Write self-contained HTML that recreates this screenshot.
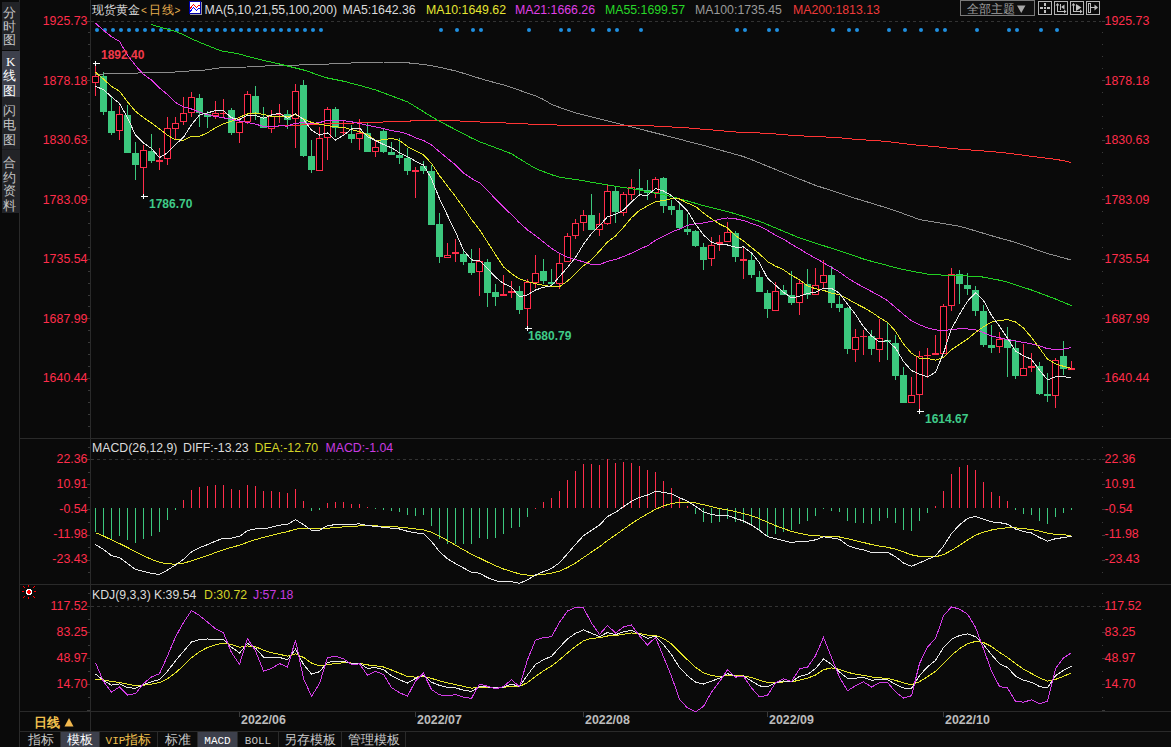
<!DOCTYPE html><html><head><meta charset="utf-8"><style>
html,body{margin:0;padding:0;background:#0a0a0a;width:1171px;height:747px;overflow:hidden}
svg{display:block}
text{font-family:"Liberation Sans", sans-serif;}
</style></head><body>
<svg width="1171" height="747" viewBox="0 0 1171 747">
<rect x="0" y="0" width="1171" height="747" fill="#0a0a0a"/>

<rect x="19" y="0" width="1" height="747" fill="#2a2a2a" shape-rendering="crispEdges"/>
<rect x="2" y="2" width="18" height="48" fill="#222327" shape-rendering="crispEdges"/>
<text x="3" y="17" font-size="13" fill="#c4c4c4">分</text>
<text x="3" y="31" font-size="13" fill="#c4c4c4">时</text>
<text x="3" y="44" font-size="13" fill="#c4c4c4">图</text>
<rect x="2" y="51" width="18" height="46" fill="#3d404c" shape-rendering="crispEdges"/>
<text x="6" y="66" font-size="13" fill="#ffffff" style="font-family:'Liberation Serif',serif">K</text>
<text x="3" y="80" font-size="13" fill="#ffffff">线</text>
<text x="3" y="95" font-size="13" fill="#ffffff">图</text>
<rect x="2" y="97" width="18" height="53" fill="#222327" shape-rendering="crispEdges"/>
<text x="3" y="115" font-size="13" fill="#c4c4c4">闪</text>
<text x="3" y="129" font-size="13" fill="#c4c4c4">电</text>
<text x="3" y="144" font-size="13" fill="#c4c4c4">图</text>
<rect x="2" y="150" width="18" height="63" fill="#222327" shape-rendering="crispEdges"/>
<text x="3" y="167" font-size="13" fill="#c4c4c4">合</text>
<text x="3" y="182" font-size="13" fill="#c4c4c4">约</text>
<text x="3" y="195" font-size="13" fill="#c4c4c4">资</text>
<text x="3" y="210" font-size="13" fill="#c4c4c4">料</text>
<rect x="2" y="149" width="18" height="1" fill="#1a1b1e" shape-rendering="crispEdges"/>
<g shape-rendering="crispEdges" stroke="#2a2a2a" stroke-width="1">
<line x1="90.5" y1="0" x2="90.5" y2="731"/>
<line x1="20" y1="438.5" x2="1171" y2="438.5"/>
<line x1="20" y1="584.5" x2="1171" y2="584.5"/>
<line x1="20" y1="711.5" x2="1171" y2="711.5"/>
<line x1="20" y1="731.5" x2="1171" y2="731.5"/>
</g>
<g shape-rendering="crispEdges" fill="#3a3a3a">
<rect x="87" y="21" width="3" height="1"/>
<rect x="1102" y="21" width="3" height="1"/>
<rect x="88" y="32" width="2" height="1"/>
<rect x="1102" y="32" width="1" height="1"/>
<rect x="88" y="44" width="2" height="1"/>
<rect x="1102" y="44" width="1" height="1"/>
<rect x="88" y="56" width="2" height="1"/>
<rect x="1102" y="56" width="1" height="1"/>
<rect x="88" y="68" width="2" height="1"/>
<rect x="1102" y="68" width="1" height="1"/>
<rect x="87" y="80" width="3" height="1"/>
<rect x="1102" y="80" width="3" height="1"/>
<rect x="88" y="92" width="2" height="1"/>
<rect x="1102" y="92" width="1" height="1"/>
<rect x="88" y="104" width="2" height="1"/>
<rect x="1102" y="104" width="1" height="1"/>
<rect x="88" y="116" width="2" height="1"/>
<rect x="1102" y="116" width="1" height="1"/>
<rect x="88" y="128" width="2" height="1"/>
<rect x="1102" y="128" width="1" height="1"/>
<rect x="87" y="140" width="3" height="1"/>
<rect x="1102" y="140" width="3" height="1"/>
<rect x="88" y="152" width="2" height="1"/>
<rect x="1102" y="152" width="1" height="1"/>
<rect x="88" y="163" width="2" height="1"/>
<rect x="1102" y="163" width="1" height="1"/>
<rect x="88" y="175" width="2" height="1"/>
<rect x="1102" y="175" width="1" height="1"/>
<rect x="88" y="187" width="2" height="1"/>
<rect x="1102" y="187" width="1" height="1"/>
<rect x="87" y="199" width="3" height="1"/>
<rect x="1102" y="199" width="3" height="1"/>
<rect x="88" y="211" width="2" height="1"/>
<rect x="1102" y="211" width="1" height="1"/>
<rect x="88" y="223" width="2" height="1"/>
<rect x="1102" y="223" width="1" height="1"/>
<rect x="88" y="235" width="2" height="1"/>
<rect x="1102" y="235" width="1" height="1"/>
<rect x="88" y="247" width="2" height="1"/>
<rect x="1102" y="247" width="1" height="1"/>
<rect x="87" y="259" width="3" height="1"/>
<rect x="1102" y="259" width="3" height="1"/>
<rect x="88" y="271" width="2" height="1"/>
<rect x="1102" y="271" width="1" height="1"/>
<rect x="88" y="283" width="2" height="1"/>
<rect x="1102" y="283" width="1" height="1"/>
<rect x="88" y="295" width="2" height="1"/>
<rect x="1102" y="295" width="1" height="1"/>
<rect x="88" y="306" width="2" height="1"/>
<rect x="1102" y="306" width="1" height="1"/>
<rect x="87" y="318" width="3" height="1"/>
<rect x="1102" y="318" width="3" height="1"/>
<rect x="88" y="330" width="2" height="1"/>
<rect x="1102" y="330" width="1" height="1"/>
<rect x="88" y="342" width="2" height="1"/>
<rect x="1102" y="342" width="1" height="1"/>
<rect x="88" y="354" width="2" height="1"/>
<rect x="1102" y="354" width="1" height="1"/>
<rect x="88" y="366" width="2" height="1"/>
<rect x="1102" y="366" width="1" height="1"/>
<rect x="87" y="378" width="3" height="1"/>
<rect x="1102" y="378" width="3" height="1"/>
<rect x="88" y="390" width="2" height="1"/>
<rect x="1102" y="390" width="1" height="1"/>
<rect x="88" y="402" width="2" height="1"/>
<rect x="1102" y="402" width="1" height="1"/>
<rect x="88" y="414" width="2" height="1"/>
<rect x="1102" y="414" width="1" height="1"/>
<rect x="88" y="426" width="2" height="1"/>
<rect x="1102" y="426" width="1" height="1"/>
<rect x="88" y="447" width="2" height="1"/>
<rect x="1102" y="447" width="1" height="1"/>
<rect x="87" y="459" width="3" height="1"/>
<rect x="1102" y="459" width="3" height="1"/>
<rect x="88" y="472" width="2" height="1"/>
<rect x="1102" y="472" width="1" height="1"/>
<rect x="87" y="484" width="3" height="1"/>
<rect x="1102" y="484" width="3" height="1"/>
<rect x="88" y="497" width="2" height="1"/>
<rect x="1102" y="497" width="1" height="1"/>
<rect x="87" y="509" width="3" height="1"/>
<rect x="1102" y="509" width="3" height="1"/>
<rect x="88" y="522" width="2" height="1"/>
<rect x="1102" y="522" width="1" height="1"/>
<rect x="87" y="535" width="3" height="1"/>
<rect x="1102" y="535" width="3" height="1"/>
<rect x="88" y="547" width="2" height="1"/>
<rect x="1102" y="547" width="1" height="1"/>
<rect x="87" y="560" width="3" height="1"/>
<rect x="1102" y="560" width="3" height="1"/>
<rect x="88" y="572" width="2" height="1"/>
<rect x="1102" y="572" width="1" height="1"/>
<rect x="88" y="593" width="2" height="1"/>
<rect x="1102" y="593" width="1" height="1"/>
<rect x="87" y="606" width="3" height="1"/>
<rect x="1102" y="606" width="3" height="1"/>
<rect x="88" y="619" width="2" height="1"/>
<rect x="1102" y="619" width="1" height="1"/>
<rect x="87" y="632" width="3" height="1"/>
<rect x="1102" y="632" width="3" height="1"/>
<rect x="88" y="645" width="2" height="1"/>
<rect x="1102" y="645" width="1" height="1"/>
<rect x="87" y="658" width="3" height="1"/>
<rect x="1102" y="658" width="3" height="1"/>
<rect x="88" y="671" width="2" height="1"/>
<rect x="1102" y="671" width="1" height="1"/>
<rect x="87" y="684" width="3" height="1"/>
<rect x="1102" y="684" width="3" height="1"/>
<rect x="88" y="697" width="2" height="1"/>
<rect x="1102" y="697" width="1" height="1"/>
<rect x="87" y="710" width="3" height="1"/>
<rect x="1102" y="710" width="3" height="1"/>
</g>
<line x1="91" y1="21.5" x2="1101" y2="21.5" stroke="#333333" stroke-width="1" stroke-dasharray="3 3" shape-rendering="crispEdges"/>
<line x1="91" y1="459.5" x2="1101" y2="459.5" stroke="#333333" stroke-width="1" stroke-dasharray="3 3" shape-rendering="crispEdges"/>
<line x1="91" y1="606.5" x2="1101" y2="606.5" stroke="#333333" stroke-width="1" stroke-dasharray="3 3" shape-rendering="crispEdges"/>
<text x="87.5" y="25" font-size="12.4" fill="#ff2d4b" text-anchor="end">1925.73</text>
<text x="1104.5" y="25" font-size="12.4" fill="#ff2d4b">1925.73</text>
<text x="87.5" y="84.5" font-size="12.4" fill="#ff2d4b" text-anchor="end">1878.18</text>
<text x="1104.5" y="84.5" font-size="12.4" fill="#ff2d4b">1878.18</text>
<text x="87.5" y="144" font-size="12.4" fill="#ff2d4b" text-anchor="end">1830.63</text>
<text x="1104.5" y="144" font-size="12.4" fill="#ff2d4b">1830.63</text>
<text x="87.5" y="203.5" font-size="12.4" fill="#ff2d4b" text-anchor="end">1783.09</text>
<text x="1104.5" y="203.5" font-size="12.4" fill="#ff2d4b">1783.09</text>
<text x="87.5" y="263" font-size="12.4" fill="#ff2d4b" text-anchor="end">1735.54</text>
<text x="1104.5" y="263" font-size="12.4" fill="#ff2d4b">1735.54</text>
<text x="87.5" y="322.5" font-size="12.4" fill="#ff2d4b" text-anchor="end">1687.99</text>
<text x="1104.5" y="322.5" font-size="12.4" fill="#ff2d4b">1687.99</text>
<text x="87.5" y="382" font-size="12.4" fill="#ff2d4b" text-anchor="end">1640.44</text>
<text x="1104.5" y="382" font-size="12.4" fill="#ff2d4b">1640.44</text>
<text x="87.5" y="463" font-size="12.4" fill="#ff2d4b" text-anchor="end">22.36</text>
<text x="1104.5" y="463" font-size="12.4" fill="#ff2d4b">22.36</text>
<text x="87.5" y="488" font-size="12.4" fill="#ff2d4b" text-anchor="end">10.91</text>
<text x="1104.5" y="488" font-size="12.4" fill="#ff2d4b">10.91</text>
<text x="87.5" y="513" font-size="12.4" fill="#ff2d4b" text-anchor="end">-0.54</text>
<text x="1104.5" y="513" font-size="12.4" fill="#ff2d4b">-0.54</text>
<text x="87.5" y="538" font-size="12.4" fill="#ff2d4b" text-anchor="end">-11.98</text>
<text x="1104.5" y="538" font-size="12.4" fill="#ff2d4b">-11.98</text>
<text x="87.5" y="563" font-size="12.4" fill="#ff2d4b" text-anchor="end">-23.43</text>
<text x="1104.5" y="563" font-size="12.4" fill="#ff2d4b">-23.43</text>
<text x="87.5" y="610.3" font-size="12.4" fill="#ff2d4b" text-anchor="end">117.52</text>
<text x="1104.5" y="610.3" font-size="12.4" fill="#ff2d4b">117.52</text>
<text x="87.5" y="636" font-size="12.4" fill="#ff2d4b" text-anchor="end">83.25</text>
<text x="1104.5" y="636" font-size="12.4" fill="#ff2d4b">83.25</text>
<text x="87.5" y="662" font-size="12.4" fill="#ff2d4b" text-anchor="end">48.97</text>
<text x="1104.5" y="662" font-size="12.4" fill="#ff2d4b">48.97</text>
<text x="87.5" y="688" font-size="12.4" fill="#ff2d4b" text-anchor="end">14.70</text>
<text x="1104.5" y="688" font-size="12.4" fill="#ff2d4b">14.70</text>
<text x="92" y="14" font-size="12" fill="#dcdcdc">现货黄金</text>
<text x="141" y="13.5" font-size="10" fill="#e8b050">&lt;</text><text x="149" y="14" font-size="12" fill="#e8b050">日</text><text x="161.5" y="14" font-size="12" fill="#e8b050">线</text><text x="174.5" y="13.5" font-size="10" fill="#e8b050">&gt;</text>
<g shape-rendering="crispEdges"><rect x="190" y="14" width="11" height="1" fill="#9a9a9a"/><rect x="201" y="2" width="1" height="13" fill="#9a9a9a"/><rect x="189.5" y="1.5" width="11" height="12" fill="#ffffff" stroke="#0000a8"/><polyline points="190,8.5 193.5,4.5 196.5,7.5 198.5,5.5 200,5.5" fill="none" stroke="#ff0000" stroke-width="1"/><polyline points="190,11.5 193.5,7.5 196.5,10.5 198.5,8.5 200,8.5" fill="none" stroke="#0000ff" stroke-width="1"/></g>
<text x="204.5" y="14" font-size="12.3" fill="#dcdcdc">MA(5,10,21,55,100,200)</text>
<text x="342.5" y="14" font-size="12.3" fill="#dcdcdc">MA5:1642.36</text>
<text x="426" y="14" font-size="12.3" fill="#e6e632">MA10:1649.62</text>
<text x="515" y="14" font-size="12.3" fill="#e040e8">MA21:1666.26</text>
<text x="605" y="14" font-size="12.3" fill="#28d828">MA55:1699.57</text>
<text x="695" y="14" font-size="12.3" fill="#9a9a9a">MA100:1735.45</text>
<text x="793" y="14" font-size="12.3" fill="#f03a3a">MA200:1813.13</text>
<g shape-rendering="crispEdges">
<rect x="960.5" y="0.5" width="74" height="15" fill="#101010" stroke="#7a7a7a"/>
</g>
<text x="967" y="12.5" font-size="12" fill="#a0a0a0">全部主题</text><path d="M1017 5.5 L1025.5 5.5 L1021.25 13 Z" fill="#a8a8a8"/>
<rect x="1038.5" y="1.5" width="13" height="13" fill="none" stroke="#b4b4b4" shape-rendering="crispEdges"/>
<rect x="1054.5" y="1.5" width="13" height="13" fill="none" stroke="#b4b4b4" shape-rendering="crispEdges"/>
<rect x="1070.5" y="1.5" width="13" height="13" fill="none" stroke="#b4b4b4" shape-rendering="crispEdges"/>
<rect x="1086.5" y="1.5" width="13" height="13" fill="none" stroke="#b4b4b4" shape-rendering="crispEdges"/>
<g fill="#c0c0c0"><rect x="1044" y="3" width="2" height="3"/><rect x="1044" y="10" width="2" height="3"/><rect x="1040" y="7" width="3" height="2"/><rect x="1047" y="7" width="3" height="2"/><rect x="1044" y="7" width="2" height="2"/><rect x="1057" y="4" width="1" height="8"/><path d="M1055.5 5.5 L1057.5 3 L1059.5 5.5Z"/><rect x="1057" y="11" width="8" height="1"/><path d="M1064 9.5 L1066.5 11.5 L1064 13.5Z"/><rect x="1060" y="4" width="1" height="6"/><path d="M1064.5 4.5 L1061 7 L1064.5 9.5Z"/><rect x="1073" y="4" width="1" height="8"/><path d="M1071.5 5.5 L1073.5 3 L1075.5 5.5Z"/><rect x="1073" y="11" width="8" height="1"/><path d="M1080 9.5 L1082.5 11.5 L1080 13.5Z"/><path d="M1076 4 L1081.5 7.5 L1076 11Z"/><rect x="1088.5" y="3.5" width="2" height="9" fill="none" stroke="#c0c0c0" stroke-width="1"/><rect x="1090" y="7" width="5" height="1"/><path d="M1094.5 4.5 L1098 7.5 L1094.5 10.5Z"/></g>
<circle cx="97.0" cy="30" r="2" fill="#1f8fe0"/>
<circle cx="105.0" cy="30" r="2" fill="#1f8fe0"/>
<circle cx="113.0" cy="30" r="2" fill="#1f8fe0"/>
<circle cx="121.0" cy="30" r="2" fill="#1f8fe0"/>
<circle cx="129.0" cy="30" r="2" fill="#1f8fe0"/>
<circle cx="137.0" cy="30" r="2" fill="#1f8fe0"/>
<circle cx="145.0" cy="30" r="2" fill="#1f8fe0"/>
<circle cx="153.0" cy="30" r="2" fill="#1f8fe0"/>
<circle cx="161.0" cy="30" r="2" fill="#1f8fe0"/>
<circle cx="169.0" cy="30" r="2" fill="#1f8fe0"/>
<circle cx="177.0" cy="30" r="2" fill="#1f8fe0"/>
<circle cx="185.0" cy="30" r="2" fill="#1f8fe0"/>
<circle cx="193.0" cy="30" r="2" fill="#1f8fe0"/>
<circle cx="201.0" cy="30" r="2" fill="#1f8fe0"/>
<circle cx="209.0" cy="30" r="2" fill="#1f8fe0"/>
<circle cx="217.0" cy="30" r="2" fill="#1f8fe0"/>
<circle cx="225.0" cy="30" r="2" fill="#1f8fe0"/>
<circle cx="233.0" cy="30" r="2" fill="#1f8fe0"/>
<circle cx="241.0" cy="30" r="2" fill="#1f8fe0"/>
<circle cx="249.0" cy="30" r="2" fill="#1f8fe0"/>
<circle cx="257.0" cy="30" r="2" fill="#1f8fe0"/>
<circle cx="265.0" cy="30" r="2" fill="#1f8fe0"/>
<circle cx="273.0" cy="30" r="2" fill="#1f8fe0"/>
<circle cx="281.0" cy="30" r="2" fill="#1f8fe0"/>
<circle cx="289.0" cy="30" r="2" fill="#1f8fe0"/>
<circle cx="297.0" cy="30" r="2" fill="#1f8fe0"/>
<circle cx="305.0" cy="30" r="2" fill="#1f8fe0"/>
<circle cx="313.0" cy="30" r="2" fill="#1f8fe0"/>
<circle cx="321.0" cy="30" r="2" fill="#1f8fe0"/>
<circle cx="441.0" cy="30" r="2" fill="#1f8fe0"/>
<circle cx="457.0" cy="30" r="2" fill="#1f8fe0"/>
<circle cx="473.0" cy="30" r="2" fill="#1f8fe0"/>
<circle cx="481.0" cy="30" r="2" fill="#1f8fe0"/>
<circle cx="529.0" cy="30" r="2" fill="#1f8fe0"/>
<circle cx="561.0" cy="30" r="2" fill="#1f8fe0"/>
<circle cx="569.0" cy="30" r="2" fill="#1f8fe0"/>
<circle cx="593.0" cy="30" r="2" fill="#1f8fe0"/>
<circle cx="609.0" cy="30" r="2" fill="#1f8fe0"/>
<circle cx="617.0" cy="30" r="2" fill="#1f8fe0"/>
<circle cx="641.0" cy="30" r="2" fill="#1f8fe0"/>
<circle cx="737.0" cy="30" r="2" fill="#1f8fe0"/>
<circle cx="745.0" cy="30" r="2" fill="#1f8fe0"/>
<circle cx="769.0" cy="30" r="2" fill="#1f8fe0"/>
<circle cx="777.0" cy="30" r="2" fill="#1f8fe0"/>
<circle cx="833.0" cy="30" r="2" fill="#1f8fe0"/>
<circle cx="849.0" cy="30" r="2" fill="#1f8fe0"/>
<circle cx="857.0" cy="30" r="2" fill="#1f8fe0"/>
<circle cx="889.0" cy="30" r="2" fill="#1f8fe0"/>
<circle cx="905.0" cy="30" r="2" fill="#1f8fe0"/>
<circle cx="921.0" cy="30" r="2" fill="#1f8fe0"/>
<circle cx="937.0" cy="30" r="2" fill="#1f8fe0"/>
<circle cx="945.0" cy="30" r="2" fill="#1f8fe0"/>
<circle cx="977.0" cy="30" r="2" fill="#1f8fe0"/>
<circle cx="1009.0" cy="30" r="2" fill="#1f8fe0"/>
<circle cx="1017.0" cy="30" r="2" fill="#1f8fe0"/>
<circle cx="1041.0" cy="30" r="2" fill="#1f8fe0"/>
<circle cx="1057.0" cy="30" r="2" fill="#1f8fe0"/>
<g shape-rendering="crispEdges">
<rect x="95" y="63" width="1" height="13" fill="#ff2d4b"/>
<rect x="95" y="83" width="1" height="13" fill="#ff2d4b"/>
<rect x="92.5" y="76.5" width="6" height="6" fill="#000000" stroke="#ff2d4b" stroke-width="1"/>
<rect x="103" y="72" width="1" height="4" fill="#3cc87e"/>
<rect x="103" y="112" width="1" height="3" fill="#3cc87e"/>
<rect x="100" y="76" width="7" height="36" fill="#3cc87e"/>
<rect x="111" y="96" width="1" height="15" fill="#3cc87e"/>
<rect x="111" y="133" width="1" height="2" fill="#3cc87e"/>
<rect x="108" y="111" width="7" height="22" fill="#3cc87e"/>
<rect x="119" y="106" width="1" height="8" fill="#ff2d4b"/>
<rect x="119" y="131" width="1" height="9" fill="#ff2d4b"/>
<rect x="116.5" y="114.5" width="6" height="16" fill="#000000" stroke="#ff2d4b" stroke-width="1"/>
<rect x="127" y="105" width="1" height="10" fill="#3cc87e"/>
<rect x="124" y="115" width="7" height="38" fill="#3cc87e"/>
<rect x="135" y="142" width="1" height="11" fill="#3cc87e"/>
<rect x="135" y="165" width="1" height="15" fill="#3cc87e"/>
<rect x="132" y="153" width="7" height="12" fill="#3cc87e"/>
<rect x="143" y="145" width="1" height="5" fill="#ff2d4b"/>
<rect x="143" y="168" width="1" height="28" fill="#ff2d4b"/>
<rect x="140.5" y="150.5" width="6" height="17" fill="#000000" stroke="#ff2d4b" stroke-width="1"/>
<rect x="151" y="134" width="1" height="17" fill="#3cc87e"/>
<rect x="151" y="161" width="1" height="2" fill="#3cc87e"/>
<rect x="148" y="151" width="7" height="10" fill="#3cc87e"/>
<rect x="159" y="148" width="1" height="12" fill="#ff2d4b"/>
<rect x="159" y="162" width="1" height="8" fill="#ff2d4b"/>
<rect x="156" y="160" width="7" height="2" fill="#ff2d4b"/>
<rect x="167" y="117" width="1" height="11" fill="#ff2d4b"/>
<rect x="167" y="159" width="1" height="6" fill="#ff2d4b"/>
<rect x="164.5" y="128.5" width="6" height="30" fill="#000000" stroke="#ff2d4b" stroke-width="1"/>
<rect x="175" y="117" width="1" height="6" fill="#ff2d4b"/>
<rect x="175" y="129" width="1" height="10" fill="#ff2d4b"/>
<rect x="172.5" y="123.5" width="6" height="5" fill="#000000" stroke="#ff2d4b" stroke-width="1"/>
<rect x="183" y="97" width="1" height="16" fill="#ff2d4b"/>
<rect x="183" y="122" width="1" height="3" fill="#ff2d4b"/>
<rect x="180.5" y="113.5" width="6" height="8" fill="#000000" stroke="#ff2d4b" stroke-width="1"/>
<rect x="191" y="92" width="1" height="5" fill="#ff2d4b"/>
<rect x="191" y="113" width="1" height="4" fill="#ff2d4b"/>
<rect x="188.5" y="97.5" width="6" height="15" fill="#000000" stroke="#ff2d4b" stroke-width="1"/>
<rect x="199" y="94" width="1" height="4" fill="#3cc87e"/>
<rect x="199" y="113" width="1" height="14" fill="#3cc87e"/>
<rect x="196" y="98" width="7" height="15" fill="#3cc87e"/>
<rect x="207" y="111" width="1" height="3" fill="#3cc87e"/>
<rect x="207" y="117" width="1" height="11" fill="#3cc87e"/>
<rect x="204" y="114" width="7" height="3" fill="#3cc87e"/>
<rect x="215" y="101" width="1" height="12" fill="#ff2d4b"/>
<rect x="215" y="116" width="1" height="3" fill="#ff2d4b"/>
<rect x="212.5" y="113.5" width="6" height="2" fill="#000000" stroke="#ff2d4b" stroke-width="1"/>
<rect x="223" y="99" width="1" height="14" fill="#ff2d4b"/>
<rect x="223" y="114" width="1" height="4" fill="#ff2d4b"/>
<rect x="220" y="113" width="7" height="1" fill="#ff2d4b"/>
<rect x="231" y="108" width="1" height="2" fill="#3cc87e"/>
<rect x="231" y="133" width="1" height="2" fill="#3cc87e"/>
<rect x="228" y="110" width="7" height="23" fill="#3cc87e"/>
<rect x="239" y="118" width="1" height="4" fill="#ff2d4b"/>
<rect x="239" y="133" width="1" height="10" fill="#ff2d4b"/>
<rect x="236.5" y="122.5" width="6" height="10" fill="#000000" stroke="#ff2d4b" stroke-width="1"/>
<rect x="247" y="91" width="1" height="3" fill="#ff2d4b"/>
<rect x="247" y="122" width="1" height="2" fill="#ff2d4b"/>
<rect x="244.5" y="94.5" width="6" height="27" fill="#000000" stroke="#ff2d4b" stroke-width="1"/>
<rect x="255" y="86" width="1" height="10" fill="#3cc87e"/>
<rect x="255" y="114" width="1" height="6" fill="#3cc87e"/>
<rect x="252" y="96" width="7" height="18" fill="#3cc87e"/>
<rect x="263" y="107" width="1" height="10" fill="#3cc87e"/>
<rect x="260" y="117" width="7" height="11" fill="#3cc87e"/>
<rect x="271" y="110" width="1" height="6" fill="#ff2d4b"/>
<rect x="271" y="129" width="1" height="4" fill="#ff2d4b"/>
<rect x="268.5" y="116.5" width="6" height="12" fill="#000000" stroke="#ff2d4b" stroke-width="1"/>
<rect x="279" y="104" width="1" height="10" fill="#ff2d4b"/>
<rect x="279" y="115" width="1" height="8" fill="#ff2d4b"/>
<rect x="276" y="114" width="7" height="1" fill="#ff2d4b"/>
<rect x="287" y="110" width="1" height="4" fill="#3cc87e"/>
<rect x="287" y="120" width="1" height="9" fill="#3cc87e"/>
<rect x="284" y="114" width="7" height="6" fill="#3cc87e"/>
<rect x="295" y="84" width="1" height="7" fill="#ff2d4b"/>
<rect x="295" y="119" width="1" height="29" fill="#ff2d4b"/>
<rect x="292.5" y="91.5" width="6" height="27" fill="#000000" stroke="#ff2d4b" stroke-width="1"/>
<rect x="303" y="80" width="1" height="5" fill="#3cc87e"/>
<rect x="303" y="156" width="1" height="1" fill="#3cc87e"/>
<rect x="300" y="85" width="7" height="71" fill="#3cc87e"/>
<rect x="311" y="140" width="1" height="16" fill="#3cc87e"/>
<rect x="311" y="170" width="1" height="3" fill="#3cc87e"/>
<rect x="308" y="156" width="7" height="14" fill="#3cc87e"/>
<rect x="319" y="127" width="1" height="11" fill="#ff2d4b"/>
<rect x="316.5" y="138.5" width="6" height="32" fill="#000000" stroke="#ff2d4b" stroke-width="1"/>
<rect x="327" y="107" width="1" height="2" fill="#ff2d4b"/>
<rect x="327" y="138" width="1" height="22" fill="#ff2d4b"/>
<rect x="324.5" y="109.5" width="6" height="28" fill="#000000" stroke="#ff2d4b" stroke-width="1"/>
<rect x="335" y="107" width="1" height="2" fill="#3cc87e"/>
<rect x="335" y="128" width="1" height="9" fill="#3cc87e"/>
<rect x="332" y="109" width="7" height="19" fill="#3cc87e"/>
<rect x="343" y="121" width="1" height="11" fill="#ff2d4b"/>
<rect x="343" y="133" width="1" height="3" fill="#ff2d4b"/>
<rect x="340" y="132" width="7" height="1" fill="#ff2d4b"/>
<rect x="351" y="125" width="1" height="9" fill="#3cc87e"/>
<rect x="351" y="139" width="1" height="4" fill="#3cc87e"/>
<rect x="348" y="134" width="7" height="5" fill="#3cc87e"/>
<rect x="359" y="119" width="1" height="14" fill="#ff2d4b"/>
<rect x="359" y="139" width="1" height="11" fill="#ff2d4b"/>
<rect x="356.5" y="133.5" width="6" height="5" fill="#000000" stroke="#ff2d4b" stroke-width="1"/>
<rect x="367" y="122" width="1" height="11" fill="#3cc87e"/>
<rect x="364" y="133" width="7" height="19" fill="#3cc87e"/>
<rect x="375" y="140" width="1" height="7" fill="#ff2d4b"/>
<rect x="375" y="152" width="1" height="5" fill="#ff2d4b"/>
<rect x="372.5" y="147.5" width="6" height="4" fill="#000000" stroke="#ff2d4b" stroke-width="1"/>
<rect x="383" y="129" width="1" height="2" fill="#3cc87e"/>
<rect x="383" y="152" width="1" height="1" fill="#3cc87e"/>
<rect x="380" y="131" width="7" height="21" fill="#3cc87e"/>
<rect x="391" y="142" width="1" height="10" fill="#3cc87e"/>
<rect x="388" y="152" width="7" height="3" fill="#3cc87e"/>
<rect x="399" y="138" width="1" height="17" fill="#3cc87e"/>
<rect x="399" y="158" width="1" height="6" fill="#3cc87e"/>
<rect x="396" y="155" width="7" height="3" fill="#3cc87e"/>
<rect x="407" y="148" width="1" height="10" fill="#3cc87e"/>
<rect x="407" y="171" width="1" height="4" fill="#3cc87e"/>
<rect x="404" y="158" width="7" height="13" fill="#3cc87e"/>
<rect x="415" y="167" width="1" height="3" fill="#ff2d4b"/>
<rect x="415" y="172" width="1" height="26" fill="#ff2d4b"/>
<rect x="412" y="170" width="7" height="2" fill="#ff2d4b"/>
<rect x="423" y="161" width="1" height="5" fill="#3cc87e"/>
<rect x="423" y="171" width="1" height="3" fill="#3cc87e"/>
<rect x="420" y="166" width="7" height="5" fill="#3cc87e"/>
<rect x="431" y="165" width="1" height="6" fill="#3cc87e"/>
<rect x="428" y="171" width="7" height="54" fill="#3cc87e"/>
<rect x="439" y="213" width="1" height="11" fill="#3cc87e"/>
<rect x="439" y="257" width="1" height="6" fill="#3cc87e"/>
<rect x="436" y="224" width="7" height="33" fill="#3cc87e"/>
<rect x="447" y="243" width="1" height="12" fill="#ff2d4b"/>
<rect x="444.5" y="255.5" width="6" height="2" fill="#000000" stroke="#ff2d4b" stroke-width="1"/>
<rect x="455" y="239" width="1" height="13" fill="#ff2d4b"/>
<rect x="455" y="254" width="1" height="8" fill="#ff2d4b"/>
<rect x="452" y="252" width="7" height="2" fill="#ff2d4b"/>
<rect x="463" y="251" width="1" height="3" fill="#3cc87e"/>
<rect x="463" y="262" width="1" height="3" fill="#3cc87e"/>
<rect x="460" y="254" width="7" height="8" fill="#3cc87e"/>
<rect x="471" y="249" width="1" height="14" fill="#3cc87e"/>
<rect x="471" y="273" width="1" height="2" fill="#3cc87e"/>
<rect x="468" y="263" width="7" height="10" fill="#3cc87e"/>
<rect x="479" y="248" width="1" height="13" fill="#ff2d4b"/>
<rect x="479" y="272" width="1" height="24" fill="#ff2d4b"/>
<rect x="476.5" y="261.5" width="6" height="10" fill="#000000" stroke="#ff2d4b" stroke-width="1"/>
<rect x="487" y="259" width="1" height="3" fill="#3cc87e"/>
<rect x="487" y="293" width="1" height="14" fill="#3cc87e"/>
<rect x="484" y="262" width="7" height="31" fill="#3cc87e"/>
<rect x="495" y="284" width="1" height="8" fill="#3cc87e"/>
<rect x="495" y="297" width="1" height="9" fill="#3cc87e"/>
<rect x="492" y="292" width="7" height="5" fill="#3cc87e"/>
<rect x="503" y="275" width="1" height="19" fill="#ff2d4b"/>
<rect x="500" y="294" width="7" height="2" fill="#ff2d4b"/>
<rect x="511" y="281" width="1" height="10" fill="#ff2d4b"/>
<rect x="511" y="293" width="1" height="5" fill="#ff2d4b"/>
<rect x="508" y="291" width="7" height="2" fill="#ff2d4b"/>
<rect x="519" y="286" width="1" height="5" fill="#3cc87e"/>
<rect x="519" y="310" width="1" height="4" fill="#3cc87e"/>
<rect x="516" y="291" width="7" height="19" fill="#3cc87e"/>
<rect x="527" y="279" width="1" height="3" fill="#ff2d4b"/>
<rect x="527" y="309" width="1" height="19" fill="#ff2d4b"/>
<rect x="524.5" y="282.5" width="6" height="26" fill="#000000" stroke="#ff2d4b" stroke-width="1"/>
<rect x="535" y="255" width="1" height="18" fill="#ff2d4b"/>
<rect x="535" y="283" width="1" height="5" fill="#ff2d4b"/>
<rect x="532.5" y="273.5" width="6" height="9" fill="#000000" stroke="#ff2d4b" stroke-width="1"/>
<rect x="543" y="259" width="1" height="12" fill="#3cc87e"/>
<rect x="543" y="281" width="1" height="3" fill="#3cc87e"/>
<rect x="540" y="271" width="7" height="10" fill="#3cc87e"/>
<rect x="551" y="269" width="1" height="13" fill="#3cc87e"/>
<rect x="551" y="284" width="1" height="2" fill="#3cc87e"/>
<rect x="548" y="282" width="7" height="2" fill="#3cc87e"/>
<rect x="559" y="254" width="1" height="9" fill="#ff2d4b"/>
<rect x="559" y="284" width="1" height="5" fill="#ff2d4b"/>
<rect x="556.5" y="263.5" width="6" height="20" fill="#000000" stroke="#ff2d4b" stroke-width="1"/>
<rect x="567" y="233" width="1" height="3" fill="#ff2d4b"/>
<rect x="564.5" y="236.5" width="6" height="25" fill="#000000" stroke="#ff2d4b" stroke-width="1"/>
<rect x="575" y="219" width="1" height="4" fill="#ff2d4b"/>
<rect x="575" y="236" width="1" height="3" fill="#ff2d4b"/>
<rect x="572.5" y="223.5" width="6" height="12" fill="#000000" stroke="#ff2d4b" stroke-width="1"/>
<rect x="583" y="210" width="1" height="5" fill="#ff2d4b"/>
<rect x="583" y="223" width="1" height="8" fill="#ff2d4b"/>
<rect x="580.5" y="215.5" width="6" height="7" fill="#000000" stroke="#ff2d4b" stroke-width="1"/>
<rect x="591" y="194" width="1" height="21" fill="#3cc87e"/>
<rect x="588" y="215" width="7" height="15" fill="#3cc87e"/>
<rect x="599" y="213" width="1" height="11" fill="#ff2d4b"/>
<rect x="599" y="230" width="1" height="6" fill="#ff2d4b"/>
<rect x="596.5" y="224.5" width="6" height="5" fill="#000000" stroke="#ff2d4b" stroke-width="1"/>
<rect x="607" y="185" width="1" height="6" fill="#ff2d4b"/>
<rect x="607" y="224" width="1" height="1" fill="#ff2d4b"/>
<rect x="604.5" y="191.5" width="6" height="32" fill="#000000" stroke="#ff2d4b" stroke-width="1"/>
<rect x="615" y="187" width="1" height="4" fill="#3cc87e"/>
<rect x="615" y="212" width="1" height="11" fill="#3cc87e"/>
<rect x="612" y="191" width="7" height="21" fill="#3cc87e"/>
<rect x="623" y="192" width="1" height="2" fill="#ff2d4b"/>
<rect x="623" y="213" width="1" height="3" fill="#ff2d4b"/>
<rect x="620.5" y="194.5" width="6" height="18" fill="#000000" stroke="#ff2d4b" stroke-width="1"/>
<rect x="631" y="179" width="1" height="8" fill="#ff2d4b"/>
<rect x="631" y="195" width="1" height="5" fill="#ff2d4b"/>
<rect x="628.5" y="187.5" width="6" height="7" fill="#000000" stroke="#ff2d4b" stroke-width="1"/>
<rect x="639" y="169" width="1" height="19" fill="#3cc87e"/>
<rect x="639" y="190" width="1" height="4" fill="#3cc87e"/>
<rect x="636" y="188" width="7" height="2" fill="#3cc87e"/>
<rect x="647" y="180" width="1" height="10" fill="#3cc87e"/>
<rect x="647" y="193" width="1" height="7" fill="#3cc87e"/>
<rect x="644" y="190" width="7" height="3" fill="#3cc87e"/>
<rect x="655" y="177" width="1" height="2" fill="#ff2d4b"/>
<rect x="655" y="193" width="1" height="5" fill="#ff2d4b"/>
<rect x="652.5" y="179.5" width="6" height="13" fill="#000000" stroke="#ff2d4b" stroke-width="1"/>
<rect x="663" y="177" width="1" height="1" fill="#3cc87e"/>
<rect x="663" y="206" width="1" height="7" fill="#3cc87e"/>
<rect x="660" y="178" width="7" height="28" fill="#3cc87e"/>
<rect x="671" y="200" width="1" height="6" fill="#3cc87e"/>
<rect x="671" y="210" width="1" height="5" fill="#3cc87e"/>
<rect x="668" y="206" width="7" height="4" fill="#3cc87e"/>
<rect x="679" y="203" width="1" height="7" fill="#3cc87e"/>
<rect x="679" y="228" width="1" height="2" fill="#3cc87e"/>
<rect x="676" y="210" width="7" height="18" fill="#3cc87e"/>
<rect x="687" y="214" width="1" height="15" fill="#3cc87e"/>
<rect x="687" y="232" width="1" height="3" fill="#3cc87e"/>
<rect x="684" y="229" width="7" height="3" fill="#3cc87e"/>
<rect x="695" y="230" width="1" height="1" fill="#3cc87e"/>
<rect x="695" y="246" width="1" height="1" fill="#3cc87e"/>
<rect x="692" y="231" width="7" height="15" fill="#3cc87e"/>
<rect x="703" y="243" width="1" height="4" fill="#3cc87e"/>
<rect x="703" y="260" width="1" height="10" fill="#3cc87e"/>
<rect x="700" y="247" width="7" height="13" fill="#3cc87e"/>
<rect x="711" y="237" width="1" height="8" fill="#ff2d4b"/>
<rect x="711" y="259" width="1" height="7" fill="#ff2d4b"/>
<rect x="708.5" y="245.5" width="6" height="13" fill="#000000" stroke="#ff2d4b" stroke-width="1"/>
<rect x="719" y="235" width="1" height="7" fill="#ff2d4b"/>
<rect x="719" y="244" width="1" height="7" fill="#ff2d4b"/>
<rect x="716" y="242" width="7" height="2" fill="#ff2d4b"/>
<rect x="727" y="222" width="1" height="10" fill="#ff2d4b"/>
<rect x="724.5" y="232.5" width="6" height="9" fill="#000000" stroke="#ff2d4b" stroke-width="1"/>
<rect x="735" y="231" width="1" height="2" fill="#3cc87e"/>
<rect x="735" y="257" width="1" height="5" fill="#3cc87e"/>
<rect x="732" y="233" width="7" height="24" fill="#3cc87e"/>
<rect x="743" y="247" width="1" height="12" fill="#ff2d4b"/>
<rect x="743" y="261" width="1" height="18" fill="#ff2d4b"/>
<rect x="740" y="259" width="7" height="2" fill="#ff2d4b"/>
<rect x="751" y="254" width="1" height="6" fill="#3cc87e"/>
<rect x="751" y="275" width="1" height="3" fill="#3cc87e"/>
<rect x="748" y="260" width="7" height="15" fill="#3cc87e"/>
<rect x="759" y="271" width="1" height="6" fill="#3cc87e"/>
<rect x="756" y="277" width="7" height="15" fill="#3cc87e"/>
<rect x="767" y="290" width="1" height="3" fill="#3cc87e"/>
<rect x="767" y="309" width="1" height="9" fill="#3cc87e"/>
<rect x="764" y="293" width="7" height="16" fill="#3cc87e"/>
<rect x="775" y="282" width="1" height="9" fill="#ff2d4b"/>
<rect x="772.5" y="291.5" width="6" height="19" fill="#000000" stroke="#ff2d4b" stroke-width="1"/>
<rect x="783" y="285" width="1" height="5" fill="#3cc87e"/>
<rect x="780" y="290" width="7" height="5" fill="#3cc87e"/>
<rect x="791" y="271" width="1" height="24" fill="#3cc87e"/>
<rect x="791" y="303" width="1" height="2" fill="#3cc87e"/>
<rect x="788" y="295" width="7" height="8" fill="#3cc87e"/>
<rect x="799" y="280" width="1" height="3" fill="#ff2d4b"/>
<rect x="799" y="303" width="1" height="12" fill="#ff2d4b"/>
<rect x="796.5" y="283.5" width="6" height="19" fill="#000000" stroke="#ff2d4b" stroke-width="1"/>
<rect x="807" y="269" width="1" height="15" fill="#3cc87e"/>
<rect x="807" y="295" width="1" height="4" fill="#3cc87e"/>
<rect x="804" y="284" width="7" height="11" fill="#3cc87e"/>
<rect x="815" y="268" width="1" height="17" fill="#ff2d4b"/>
<rect x="812.5" y="285.5" width="6" height="9" fill="#000000" stroke="#ff2d4b" stroke-width="1"/>
<rect x="823" y="260" width="1" height="15" fill="#ff2d4b"/>
<rect x="823" y="283" width="1" height="6" fill="#ff2d4b"/>
<rect x="820.5" y="275.5" width="6" height="7" fill="#000000" stroke="#ff2d4b" stroke-width="1"/>
<rect x="831" y="266" width="1" height="9" fill="#3cc87e"/>
<rect x="831" y="303" width="1" height="5" fill="#3cc87e"/>
<rect x="828" y="275" width="7" height="28" fill="#3cc87e"/>
<rect x="839" y="296" width="1" height="8" fill="#3cc87e"/>
<rect x="839" y="308" width="1" height="4" fill="#3cc87e"/>
<rect x="836" y="304" width="7" height="4" fill="#3cc87e"/>
<rect x="847" y="307" width="1" height="1" fill="#3cc87e"/>
<rect x="847" y="349" width="1" height="5" fill="#3cc87e"/>
<rect x="844" y="308" width="7" height="41" fill="#3cc87e"/>
<rect x="855" y="329" width="1" height="8" fill="#ff2d4b"/>
<rect x="855" y="350" width="1" height="12" fill="#ff2d4b"/>
<rect x="852.5" y="337.5" width="6" height="12" fill="#000000" stroke="#ff2d4b" stroke-width="1"/>
<rect x="863" y="330" width="1" height="6" fill="#ff2d4b"/>
<rect x="863" y="337" width="1" height="18" fill="#ff2d4b"/>
<rect x="860" y="336" width="7" height="1" fill="#ff2d4b"/>
<rect x="871" y="330" width="1" height="6" fill="#3cc87e"/>
<rect x="871" y="349" width="1" height="6" fill="#3cc87e"/>
<rect x="868" y="336" width="7" height="13" fill="#3cc87e"/>
<rect x="879" y="319" width="1" height="19" fill="#ff2d4b"/>
<rect x="879" y="350" width="1" height="12" fill="#ff2d4b"/>
<rect x="876.5" y="338.5" width="6" height="11" fill="#000000" stroke="#ff2d4b" stroke-width="1"/>
<rect x="887" y="323" width="1" height="17" fill="#3cc87e"/>
<rect x="887" y="342" width="1" height="18" fill="#3cc87e"/>
<rect x="884" y="340" width="7" height="2" fill="#3cc87e"/>
<rect x="895" y="335" width="1" height="8" fill="#3cc87e"/>
<rect x="895" y="376" width="1" height="4" fill="#3cc87e"/>
<rect x="892" y="343" width="7" height="33" fill="#3cc87e"/>
<rect x="903" y="367" width="1" height="8" fill="#3cc87e"/>
<rect x="900" y="375" width="7" height="28" fill="#3cc87e"/>
<rect x="911" y="377" width="1" height="18" fill="#ff2d4b"/>
<rect x="908.5" y="395.5" width="6" height="7" fill="#000000" stroke="#ff2d4b" stroke-width="1"/>
<rect x="919" y="351" width="1" height="5" fill="#ff2d4b"/>
<rect x="919" y="395" width="1" height="16" fill="#ff2d4b"/>
<rect x="916.5" y="356.5" width="6" height="38" fill="#000000" stroke="#ff2d4b" stroke-width="1"/>
<rect x="927" y="348" width="1" height="7" fill="#ff2d4b"/>
<rect x="927" y="356" width="1" height="22" fill="#ff2d4b"/>
<rect x="924" y="355" width="7" height="1" fill="#ff2d4b"/>
<rect x="935" y="335" width="1" height="18" fill="#ff2d4b"/>
<rect x="932" y="353" width="7" height="2" fill="#ff2d4b"/>
<rect x="943" y="304" width="1" height="2" fill="#ff2d4b"/>
<rect x="940.5" y="306.5" width="6" height="47" fill="#000000" stroke="#ff2d4b" stroke-width="1"/>
<rect x="951" y="268" width="1" height="6" fill="#ff2d4b"/>
<rect x="951" y="306" width="1" height="5" fill="#ff2d4b"/>
<rect x="948.5" y="274.5" width="6" height="31" fill="#000000" stroke="#ff2d4b" stroke-width="1"/>
<rect x="959" y="270" width="1" height="4" fill="#3cc87e"/>
<rect x="959" y="284" width="1" height="20" fill="#3cc87e"/>
<rect x="956" y="274" width="7" height="10" fill="#3cc87e"/>
<rect x="967" y="273" width="1" height="12" fill="#3cc87e"/>
<rect x="967" y="289" width="1" height="6" fill="#3cc87e"/>
<rect x="964" y="285" width="7" height="4" fill="#3cc87e"/>
<rect x="975" y="286" width="1" height="4" fill="#3cc87e"/>
<rect x="975" y="311" width="1" height="5" fill="#3cc87e"/>
<rect x="972" y="290" width="7" height="21" fill="#3cc87e"/>
<rect x="983" y="305" width="1" height="6" fill="#3cc87e"/>
<rect x="983" y="345" width="1" height="2" fill="#3cc87e"/>
<rect x="980" y="311" width="7" height="34" fill="#3cc87e"/>
<rect x="991" y="325" width="1" height="20" fill="#3cc87e"/>
<rect x="991" y="348" width="1" height="5" fill="#3cc87e"/>
<rect x="988" y="345" width="7" height="3" fill="#3cc87e"/>
<rect x="999" y="332" width="1" height="7" fill="#ff2d4b"/>
<rect x="999" y="347" width="1" height="6" fill="#ff2d4b"/>
<rect x="996.5" y="339.5" width="6" height="7" fill="#000000" stroke="#ff2d4b" stroke-width="1"/>
<rect x="1007" y="327" width="1" height="12" fill="#3cc87e"/>
<rect x="1007" y="348" width="1" height="29" fill="#3cc87e"/>
<rect x="1004" y="339" width="7" height="9" fill="#3cc87e"/>
<rect x="1015" y="341" width="1" height="7" fill="#3cc87e"/>
<rect x="1015" y="376" width="1" height="3" fill="#3cc87e"/>
<rect x="1012" y="348" width="7" height="28" fill="#3cc87e"/>
<rect x="1023" y="344" width="1" height="24" fill="#ff2d4b"/>
<rect x="1020.5" y="368.5" width="6" height="7" fill="#000000" stroke="#ff2d4b" stroke-width="1"/>
<rect x="1031" y="353" width="1" height="13" fill="#ff2d4b"/>
<rect x="1031" y="368" width="1" height="4" fill="#ff2d4b"/>
<rect x="1028" y="366" width="7" height="2" fill="#ff2d4b"/>
<rect x="1039" y="362" width="1" height="4" fill="#3cc87e"/>
<rect x="1039" y="394" width="1" height="1" fill="#3cc87e"/>
<rect x="1036" y="366" width="7" height="28" fill="#3cc87e"/>
<rect x="1047" y="373" width="1" height="21" fill="#3cc87e"/>
<rect x="1047" y="396" width="1" height="6" fill="#3cc87e"/>
<rect x="1044" y="394" width="7" height="2" fill="#3cc87e"/>
<rect x="1055" y="358" width="1" height="2" fill="#ff2d4b"/>
<rect x="1055" y="396" width="1" height="12" fill="#ff2d4b"/>
<rect x="1052.5" y="360.5" width="6" height="35" fill="#000000" stroke="#ff2d4b" stroke-width="1"/>
<rect x="1063" y="341" width="1" height="15" fill="#3cc87e"/>
<rect x="1063" y="369" width="1" height="6" fill="#3cc87e"/>
<rect x="1060" y="356" width="7" height="13" fill="#3cc87e"/>
<rect x="1071" y="361" width="1" height="7" fill="#ff2d4b"/>
<rect x="1068" y="368" width="7" height="2" fill="#ff2d4b"/>
</g>
<polyline points="95.5,74.2 103.5,74.0 111.5,73.8 119.5,73.7 127.5,73.4 135.5,73.1 143.5,72.8 151.5,72.6 159.5,72.4 167.5,72.3 175.5,72.0 183.5,71.3 191.5,70.9 199.5,70.5 207.5,69.8 215.5,68.5 223.5,67.5 231.5,67.3 239.5,67.1 247.5,67.0 255.5,66.5 263.5,66.1 271.5,65.7 279.5,65.5 287.5,65.3 295.5,65.1 303.5,64.9 311.5,64.7 319.5,64.5 327.5,64.1 335.5,63.7 343.5,63.4 351.5,63.0 359.5,62.6 367.5,62.4 375.5,62.2 383.5,62.0 391.5,62.0 399.5,62.3 407.5,62.8 415.5,63.6 423.5,64.5 431.5,65.6 439.5,67.3 447.5,69.1 455.5,70.9 463.5,73.3 471.5,75.8 479.5,78.3 487.5,80.7 495.5,82.8 503.5,84.9 511.5,87.5 519.5,90.3 527.5,93.1 535.5,95.9 543.5,99.5 551.5,104.3 559.5,107.4 567.5,110.2 575.5,112.9 583.5,114.9 591.5,116.9 599.5,118.9 607.5,120.9 615.5,122.9 623.5,124.9 631.5,126.9 639.5,128.9 647.5,131.0 655.5,133.0 663.5,135.0 671.5,137.1 679.5,139.2 687.5,141.3 695.5,143.3 703.5,145.4 711.5,147.7 719.5,149.9 727.5,152.1 735.5,154.3 743.5,156.6 751.5,159.6 759.5,162.9 767.5,166.2 775.5,169.4 783.5,172.7 791.5,175.9 799.5,179.1 807.5,182.2 815.5,185.4 823.5,188.0 831.5,190.6 839.5,193.2 847.5,195.8 855.5,198.4 863.5,200.8 871.5,203.2 879.5,205.7 887.5,208.1 895.5,210.8 903.5,213.7 911.5,216.6 919.5,219.5 927.5,221.0 935.5,222.3 943.5,223.6 951.5,224.9 959.5,226.2 967.5,228.5 975.5,230.9 983.5,233.3 991.5,235.7 999.5,238.0 1007.5,240.2 1015.5,242.4 1023.5,245.2 1031.5,248.0 1039.5,250.8 1047.5,253.5 1055.5,255.7 1063.5,257.9 1071.5,260.1" fill="none" stroke="#8c8c8c" stroke-width="1" shape-rendering="crispEdges"/>
<polyline points="262.0,126.9 263.5,126.8 271.5,126.4 279.5,126.0 287.5,125.6 295.5,125.2 303.5,124.9 311.5,124.6 319.5,124.2 327.5,123.9 335.5,123.7 343.5,123.4 351.5,123.1 359.5,122.8 367.5,122.5 375.5,122.3 383.5,122.0 391.5,121.8 399.5,121.5 407.5,121.2 415.5,120.7 423.5,120.5 431.5,120.5 439.5,120.5 447.5,120.5 455.5,120.6 463.5,121.4 471.5,121.7 479.5,122.0 487.5,122.2 495.5,122.6 503.5,122.9 511.5,123.3 519.5,123.7 527.5,124.0 535.5,124.3 543.5,124.6 551.5,124.8 559.5,125.1 567.5,125.2 575.5,125.3 583.5,125.3 591.5,125.4 599.5,125.5 607.5,125.5 615.5,125.6 623.5,125.6 631.5,125.5 639.5,125.4 647.5,125.6 655.5,126.1 663.5,126.6 671.5,127.0 679.5,127.5 687.5,127.9 695.5,128.6 703.5,129.4 711.5,129.9 719.5,130.5 727.5,131.4 735.5,132.0 743.5,132.3 751.5,132.6 759.5,133.0 767.5,133.5 775.5,134.0 783.5,134.7 791.5,135.3 799.5,135.8 807.5,136.2 815.5,136.6 823.5,136.9 831.5,137.3 839.5,137.8 847.5,138.5 855.5,139.5 863.5,139.9 871.5,140.3 879.5,140.9 887.5,141.6 895.5,142.5 903.5,143.6 911.5,144.6 919.5,145.4 927.5,146.0 935.5,146.6 943.5,147.5 951.5,148.7 959.5,149.1 967.5,149.7 975.5,150.4 983.5,151.0 991.5,151.6 999.5,152.4 1007.5,153.1 1015.5,154.2 1023.5,155.2 1031.5,156.3 1039.5,157.3 1047.5,158.3 1055.5,159.3 1063.5,160.7 1071.5,162.5" fill="none" stroke="#ff3434" stroke-width="1" shape-rendering="crispEdges"/>
<polyline points="151.0,24.5 159.5,26.9 167.5,29.2 175.5,31.5 183.5,34.7 191.5,38.7 199.5,42.3 207.5,45.5 215.5,48.7 223.5,51.5 231.5,52.4 239.5,54.2 247.5,56.3 255.5,58.3 263.5,60.4 271.5,62.2 279.5,64.0 287.5,66.0 295.5,68.0 303.5,70.0 311.5,72.6 319.5,75.6 327.5,78.0 335.5,79.6 343.5,81.2 351.5,83.3 359.5,85.4 367.5,87.6 375.5,89.9 383.5,92.9 391.5,95.9 399.5,98.9 407.5,101.9 415.5,106.7 423.5,111.7 431.5,116.7 439.5,121.3 447.5,125.5 455.5,129.6 463.5,133.8 471.5,138.0 479.5,141.7 487.5,144.7 495.5,147.7 503.5,150.7 511.5,153.8 519.5,158.8 527.5,163.7 535.5,168.5 543.5,171.6 551.5,174.7 559.5,177.2 567.5,178.4 575.5,179.5 583.5,180.8 591.5,182.2 599.5,183.6 607.5,185.0 615.5,186.3 623.5,187.5 631.5,188.8 639.5,190.1 647.5,191.6 655.5,193.2 663.5,194.7 671.5,196.5 679.5,198.8 687.5,201.0 695.5,203.3 703.5,205.6 711.5,207.6 719.5,209.7 727.5,211.7 735.5,213.8 743.5,216.3 751.5,218.8 759.5,221.3 767.5,224.6 775.5,227.9 783.5,231.3 791.5,234.6 799.5,237.9 807.5,240.5 815.5,243.1 823.5,245.7 831.5,248.3 839.5,250.9 847.5,253.6 855.5,256.3 863.5,259.0 871.5,261.3 879.5,263.4 887.5,265.5 895.5,267.6 903.5,269.5 911.5,271.1 919.5,272.6 927.5,274.1 935.5,274.8 943.5,275.1 951.5,275.4 959.5,275.7 967.5,276.0 975.5,276.3 983.5,277.1 991.5,278.7 999.5,280.2 1007.5,282.2 1015.5,284.8 1023.5,287.4 1031.5,290.0 1039.5,293.0 1047.5,296.0 1055.5,299.0 1063.5,302.3 1071.5,305.7" fill="none" stroke="#22d022" stroke-width="1" shape-rendering="crispEdges"/>
<polyline points="95.5,23.2 103.5,30.3 111.5,36.7 119.5,41.5 127.5,55.1 135.5,65.6 143.5,74.4 151.5,80.0 159.5,88.0 167.5,94.5 175.5,102.5 183.5,106.9 191.5,109.0 199.5,112.2 207.5,114.6 215.5,116.5 223.5,117.8 231.5,119.4 239.5,121.0 247.5,122.5 255.5,124.1 263.5,126.5 271.5,126.8 279.5,125.8 287.5,126.1 295.5,123.2 303.5,122.8 311.5,123.7 319.5,122.6 327.5,120.2 335.5,120.1 343.5,120.6 351.5,121.8 359.5,123.5 367.5,125.3 375.5,126.8 383.5,128.6 391.5,130.6 399.5,131.8 407.5,134.1 415.5,137.7 423.5,140.4 431.5,145.0 439.5,151.7 447.5,158.5 455.5,164.8 463.5,172.9 471.5,178.5 479.5,182.8 487.5,190.2 495.5,199.1 503.5,207.1 511.5,214.7 519.5,222.8 527.5,229.9 535.5,235.7 543.5,242.0 551.5,248.3 559.5,253.4 567.5,257.2 575.5,259.7 583.5,261.8 591.5,264.6 599.5,264.6 607.5,261.5 615.5,259.4 623.5,256.6 631.5,253.1 639.5,249.1 647.5,245.8 655.5,240.4 663.5,236.1 671.5,232.1 679.5,229.1 687.5,225.4 695.5,223.7 703.5,223.0 711.5,221.3 719.5,219.3 727.5,217.9 735.5,218.8 743.5,220.5 751.5,223.4 759.5,226.3 767.5,230.4 775.5,235.1 783.5,239.1 791.5,244.3 799.5,248.8 807.5,253.8 815.5,258.2 823.5,262.8 831.5,267.4 839.5,272.1 847.5,277.9 855.5,282.9 863.5,287.2 871.5,291.5 879.5,295.9 887.5,300.6 895.5,307.5 903.5,314.4 911.5,320.9 919.5,324.8 927.5,327.8 935.5,329.9 943.5,330.6 951.5,329.6 959.5,328.7 967.5,329.0 975.5,329.7 983.5,332.6 991.5,336.0 999.5,337.8 1007.5,339.6 1015.5,340.9 1023.5,342.4 1031.5,343.8 1039.5,345.9 1047.5,348.7 1055.5,349.5 1063.5,349.2 1071.5,347.6" fill="none" stroke="#e23be6" stroke-width="1" shape-rendering="crispEdges"/>
<polyline points="95.5,72.3 103.5,79.1 111.5,86.4 119.5,91.2 127.5,101.9 135.5,111.3 143.5,117.6 151.5,123.0 159.5,128.9 167.5,135.2 175.5,139.9 183.5,140.1 191.5,136.5 199.5,136.4 207.5,132.8 215.5,127.7 223.5,123.9 231.5,121.2 239.5,117.3 247.5,114.0 255.5,113.0 263.5,114.5 271.5,116.4 279.5,116.4 287.5,116.7 295.5,114.5 303.5,118.8 311.5,122.5 319.5,124.1 327.5,125.6 335.5,126.9 343.5,127.3 351.5,129.6 359.5,131.6 367.5,134.7 375.5,140.3 383.5,139.9 391.5,138.4 399.5,140.4 407.5,146.6 415.5,150.8 423.5,154.8 431.5,163.4 439.5,175.7 447.5,186.1 455.5,196.6 463.5,207.6 471.5,219.4 479.5,229.8 487.5,242.0 495.5,254.6 503.5,266.9 511.5,273.6 519.5,278.9 527.5,281.6 535.5,283.6 543.5,285.4 551.5,286.5 559.5,286.7 567.5,281.1 575.5,273.7 583.5,265.8 591.5,259.7 599.5,251.1 607.5,242.0 615.5,235.9 623.5,227.3 631.5,217.7 639.5,210.3 647.5,205.9 655.5,201.6 663.5,200.6 671.5,198.6 679.5,199.0 687.5,203.1 695.5,206.5 703.5,213.0 711.5,218.8 719.5,224.0 727.5,227.9 735.5,235.7 743.5,241.0 751.5,247.5 759.5,253.9 767.5,261.6 775.5,266.1 783.5,269.7 791.5,275.4 799.5,279.6 807.5,285.8 815.5,288.7 823.5,290.3 831.5,293.1 839.5,294.8 847.5,298.8 855.5,303.4 863.5,307.5 871.5,312.1 879.5,317.6 887.5,322.3 895.5,331.3 903.5,344.1 911.5,353.3 919.5,358.1 927.5,358.6 935.5,360.2 943.5,357.2 951.5,349.7 959.5,344.3 967.5,339.0 975.5,332.5 983.5,326.7 991.5,322.1 999.5,320.4 1007.5,319.7 1015.5,321.9 1023.5,328.1 1031.5,337.4 1039.5,348.3 1047.5,359.0 1055.5,363.9 1063.5,366.3 1071.5,368.4" fill="none" stroke="#e6e628" stroke-width="1" shape-rendering="crispEdges"/>
<polyline points="95.5,86.4 103.5,89.6 111.5,96.8 119.5,103.5 127.5,117.6 135.5,135.2 143.5,143.0 151.5,148.5 159.5,157.7 167.5,152.8 175.5,144.6 183.5,137.2 191.5,124.6 199.5,115.1 207.5,112.8 215.5,110.7 223.5,110.7 231.5,117.8 239.5,119.6 247.5,115.1 255.5,115.4 263.5,118.3 271.5,115.0 279.5,113.2 287.5,118.3 295.5,113.7 303.5,119.4 311.5,130.1 319.5,135.0 327.5,132.9 335.5,140.1 343.5,135.3 351.5,129.0 359.5,128.1 367.5,136.6 375.5,140.5 383.5,144.5 391.5,147.8 399.5,152.7 407.5,156.6 415.5,161.2 423.5,165.0 431.5,178.9 439.5,198.7 447.5,215.5 455.5,231.9 463.5,250.2 471.5,259.9 479.5,260.8 487.5,268.4 495.5,277.2 503.5,283.6 511.5,287.2 519.5,296.9 527.5,294.8 535.5,290.0 543.5,287.3 551.5,285.8 559.5,276.5 567.5,267.4 575.5,257.4 583.5,244.3 591.5,233.6 599.5,225.7 607.5,216.7 615.5,214.4 623.5,210.2 631.5,201.8 639.5,194.9 647.5,195.2 655.5,188.7 663.5,191.0 671.5,195.5 679.5,203.1 687.5,210.9 695.5,224.2 703.5,235.0 711.5,242.1 719.5,244.9 727.5,245.0 735.5,247.1 743.5,247.0 751.5,252.9 759.5,262.9 767.5,278.3 775.5,285.2 783.5,292.3 791.5,297.9 799.5,296.2 807.5,293.4 815.5,292.2 823.5,288.3 831.5,288.3 839.5,293.3 847.5,304.2 855.5,314.5 863.5,326.7 871.5,336.0 879.5,341.9 887.5,340.5 895.5,348.1 903.5,361.5 911.5,370.6 919.5,374.2 927.5,376.8 935.5,372.3 943.5,353.0 951.5,328.8 959.5,314.4 967.5,301.3 975.5,292.8 983.5,300.5 991.5,315.3 999.5,326.3 1007.5,338.1 1015.5,351.1 1023.5,355.8 1031.5,359.4 1039.5,370.3 1047.5,379.8 1055.5,376.8 1063.5,376.9 1071.5,377.3" fill="none" stroke="#e8e8e8" stroke-width="1" shape-rendering="crispEdges"/>
<g shape-rendering="crispEdges" fill="#ffffff"><rect x="93" y="63" width="7" height="1"/><rect x="95" y="61" width="1" height="5"/></g>
<text x="101" y="58.5" font-size="12" font-weight="bold" fill="#f23a4a">1892.40</text>
<g shape-rendering="crispEdges" fill="#ffffff"><rect x="141" y="196" width="7" height="1"/><rect x="143" y="194" width="1" height="5"/></g>
<text x="149" y="207.5" font-size="12" font-weight="bold" fill="#3fcb88">1786.70</text>
<g shape-rendering="crispEdges" fill="#ffffff"><rect x="525" y="328" width="7" height="1"/><rect x="527" y="326" width="1" height="5"/></g>
<text x="528" y="339.5" font-size="12" font-weight="bold" fill="#3fcb88">1680.79</text>
<g shape-rendering="crispEdges" fill="#ffffff"><rect x="917" y="411" width="7" height="1"/><rect x="919" y="409" width="1" height="5"/></g>
<text x="925" y="422.5" font-size="12" font-weight="bold" fill="#3fcb88">1614.67</text>
<text x="92" y="452" font-size="12.3" fill="#dcdcdc">MACD(26,12,9)</text>
<text x="183" y="452" font-size="12.3" fill="#dcdcdc">DIFF:-13.23</text>
<text x="254.5" y="452" font-size="12.3" fill="#d4d428">DEA:-12.70</text>
<text x="325.5" y="452" font-size="12.3" fill="#c83ce0">MACD:-1.04</text>
<g shape-rendering="crispEdges">
<rect x="95" y="508" width="1" height="24" fill="#3cc87e"/>
<rect x="103" y="508" width="1" height="27" fill="#3cc87e"/>
<rect x="111" y="508" width="1" height="31" fill="#3cc87e"/>
<rect x="119" y="508" width="1" height="28" fill="#3cc87e"/>
<rect x="127" y="508" width="1" height="32" fill="#3cc87e"/>
<rect x="135" y="508" width="1" height="35" fill="#3cc87e"/>
<rect x="143" y="508" width="1" height="31" fill="#3cc87e"/>
<rect x="151" y="508" width="1" height="28" fill="#3cc87e"/>
<rect x="159" y="508" width="1" height="24" fill="#3cc87e"/>
<rect x="167" y="508" width="1" height="12" fill="#3cc87e"/>
<rect x="175" y="508" width="1" height="2" fill="#3cc87e"/>
<rect x="183" y="500" width="1" height="8" fill="#ff2d4b"/>
<rect x="191" y="490" width="1" height="18" fill="#ff2d4b"/>
<rect x="199" y="487" width="1" height="21" fill="#ff2d4b"/>
<rect x="207" y="486" width="1" height="22" fill="#ff2d4b"/>
<rect x="215" y="485" width="1" height="23" fill="#ff2d4b"/>
<rect x="223" y="485" width="1" height="23" fill="#ff2d4b"/>
<rect x="231" y="489" width="1" height="19" fill="#ff2d4b"/>
<rect x="239" y="490" width="1" height="18" fill="#ff2d4b"/>
<rect x="247" y="485" width="1" height="23" fill="#ff2d4b"/>
<rect x="255" y="486" width="1" height="22" fill="#ff2d4b"/>
<rect x="263" y="491" width="1" height="17" fill="#ff2d4b"/>
<rect x="271" y="491" width="1" height="17" fill="#ff2d4b"/>
<rect x="279" y="492" width="1" height="16" fill="#ff2d4b"/>
<rect x="287" y="493" width="1" height="15" fill="#ff2d4b"/>
<rect x="295" y="489" width="1" height="19" fill="#ff2d4b"/>
<rect x="303" y="501" width="1" height="7" fill="#ff2d4b"/>
<rect x="311" y="508" width="1" height="3" fill="#3cc87e"/>
<rect x="319" y="508" width="1" height="2" fill="#3cc87e"/>
<rect x="327" y="503" width="1" height="5" fill="#ff2d4b"/>
<rect x="335" y="502" width="1" height="6" fill="#ff2d4b"/>
<rect x="343" y="502" width="1" height="6" fill="#ff2d4b"/>
<rect x="351" y="504" width="1" height="4" fill="#ff2d4b"/>
<rect x="359" y="504" width="1" height="4" fill="#ff2d4b"/>
<rect x="367" y="507" width="1" height="1" fill="#ff2d4b"/>
<rect x="375" y="508" width="1" height="1" fill="#3cc87e"/>
<rect x="383" y="508" width="1" height="2" fill="#3cc87e"/>
<rect x="391" y="508" width="1" height="3" fill="#3cc87e"/>
<rect x="399" y="508" width="1" height="4" fill="#3cc87e"/>
<rect x="407" y="508" width="1" height="7" fill="#3cc87e"/>
<rect x="415" y="508" width="1" height="8" fill="#3cc87e"/>
<rect x="423" y="508" width="1" height="7" fill="#3cc87e"/>
<rect x="431" y="508" width="1" height="18" fill="#3cc87e"/>
<rect x="439" y="508" width="1" height="31" fill="#3cc87e"/>
<rect x="447" y="508" width="1" height="36" fill="#3cc87e"/>
<rect x="455" y="508" width="1" height="36" fill="#3cc87e"/>
<rect x="463" y="508" width="1" height="36" fill="#3cc87e"/>
<rect x="471" y="508" width="1" height="36" fill="#3cc87e"/>
<rect x="479" y="508" width="1" height="30" fill="#3cc87e"/>
<rect x="487" y="508" width="1" height="31" fill="#3cc87e"/>
<rect x="495" y="508" width="1" height="30" fill="#3cc87e"/>
<rect x="503" y="508" width="1" height="26" fill="#3cc87e"/>
<rect x="511" y="508" width="1" height="20" fill="#3cc87e"/>
<rect x="519" y="508" width="1" height="19" fill="#3cc87e"/>
<rect x="527" y="508" width="1" height="9" fill="#3cc87e"/>
<rect x="535" y="508" width="1" height="1" fill="#ff2d4b"/>
<rect x="543" y="502" width="1" height="6" fill="#ff2d4b"/>
<rect x="551" y="498" width="1" height="10" fill="#ff2d4b"/>
<rect x="559" y="491" width="1" height="17" fill="#ff2d4b"/>
<rect x="567" y="480" width="1" height="28" fill="#ff2d4b"/>
<rect x="575" y="471" width="1" height="37" fill="#ff2d4b"/>
<rect x="583" y="464" width="1" height="44" fill="#ff2d4b"/>
<rect x="591" y="464" width="1" height="44" fill="#ff2d4b"/>
<rect x="599" y="465" width="1" height="43" fill="#ff2d4b"/>
<rect x="607" y="459" width="1" height="49" fill="#ff2d4b"/>
<rect x="615" y="463" width="1" height="45" fill="#ff2d4b"/>
<rect x="623" y="462" width="1" height="46" fill="#ff2d4b"/>
<rect x="631" y="463" width="1" height="45" fill="#ff2d4b"/>
<rect x="639" y="466" width="1" height="42" fill="#ff2d4b"/>
<rect x="647" y="470" width="1" height="38" fill="#ff2d4b"/>
<rect x="655" y="472" width="1" height="36" fill="#ff2d4b"/>
<rect x="663" y="481" width="1" height="27" fill="#ff2d4b"/>
<rect x="671" y="488" width="1" height="20" fill="#ff2d4b"/>
<rect x="679" y="498" width="1" height="10" fill="#ff2d4b"/>
<rect x="687" y="506" width="1" height="2" fill="#ff2d4b"/>
<rect x="695" y="508" width="1" height="6" fill="#3cc87e"/>
<rect x="703" y="508" width="1" height="14" fill="#3cc87e"/>
<rect x="711" y="508" width="1" height="15" fill="#3cc87e"/>
<rect x="719" y="508" width="1" height="14" fill="#3cc87e"/>
<rect x="727" y="508" width="1" height="11" fill="#3cc87e"/>
<rect x="735" y="508" width="1" height="14" fill="#3cc87e"/>
<rect x="743" y="508" width="1" height="15" fill="#3cc87e"/>
<rect x="751" y="508" width="1" height="18" fill="#3cc87e"/>
<rect x="759" y="508" width="1" height="23" fill="#3cc87e"/>
<rect x="767" y="508" width="1" height="28" fill="#3cc87e"/>
<rect x="775" y="508" width="1" height="26" fill="#3cc87e"/>
<rect x="783" y="508" width="1" height="24" fill="#3cc87e"/>
<rect x="791" y="508" width="1" height="22" fill="#3cc87e"/>
<rect x="799" y="508" width="1" height="16" fill="#3cc87e"/>
<rect x="807" y="508" width="1" height="13" fill="#3cc87e"/>
<rect x="815" y="508" width="1" height="8" fill="#3cc87e"/>
<rect x="823" y="508" width="1" height="1" fill="#3cc87e"/>
<rect x="831" y="508" width="1" height="3" fill="#3cc87e"/>
<rect x="839" y="508" width="1" height="4" fill="#3cc87e"/>
<rect x="847" y="508" width="1" height="13" fill="#3cc87e"/>
<rect x="855" y="508" width="1" height="15" fill="#3cc87e"/>
<rect x="863" y="508" width="1" height="15" fill="#3cc87e"/>
<rect x="871" y="508" width="1" height="16" fill="#3cc87e"/>
<rect x="879" y="508" width="1" height="13" fill="#3cc87e"/>
<rect x="887" y="508" width="1" height="10" fill="#3cc87e"/>
<rect x="895" y="508" width="1" height="15" fill="#3cc87e"/>
<rect x="903" y="508" width="1" height="22" fill="#3cc87e"/>
<rect x="911" y="508" width="1" height="23" fill="#3cc87e"/>
<rect x="919" y="508" width="1" height="13" fill="#3cc87e"/>
<rect x="927" y="508" width="1" height="5" fill="#3cc87e"/>
<rect x="935" y="506" width="1" height="2" fill="#ff2d4b"/>
<rect x="943" y="491" width="1" height="17" fill="#ff2d4b"/>
<rect x="951" y="474" width="1" height="34" fill="#ff2d4b"/>
<rect x="959" y="467" width="1" height="41" fill="#ff2d4b"/>
<rect x="967" y="465" width="1" height="43" fill="#ff2d4b"/>
<rect x="975" y="470" width="1" height="38" fill="#ff2d4b"/>
<rect x="983" y="482" width="1" height="26" fill="#ff2d4b"/>
<rect x="991" y="492" width="1" height="16" fill="#ff2d4b"/>
<rect x="999" y="496" width="1" height="12" fill="#ff2d4b"/>
<rect x="1007" y="501" width="1" height="7" fill="#ff2d4b"/>
<rect x="1015" y="508" width="1" height="2" fill="#3cc87e"/>
<rect x="1023" y="508" width="1" height="6" fill="#3cc87e"/>
<rect x="1031" y="508" width="1" height="7" fill="#3cc87e"/>
<rect x="1039" y="508" width="1" height="13" fill="#3cc87e"/>
<rect x="1047" y="508" width="1" height="16" fill="#3cc87e"/>
<rect x="1055" y="508" width="1" height="9" fill="#3cc87e"/>
<rect x="1063" y="508" width="1" height="5" fill="#3cc87e"/>
<rect x="1071" y="508" width="1" height="2" fill="#3cc87e"/>
</g>
<polyline points="95.5,532.7 103.5,536.0 111.5,539.9 119.5,543.5 127.5,547.5 135.5,551.9 143.5,555.8 151.5,559.3 159.5,562.3 167.5,563.9 175.5,564.1 183.5,563.1 191.5,560.9 199.5,558.2 207.5,555.5 215.5,552.6 223.5,549.7 231.5,547.4 239.5,545.2 247.5,542.3 255.5,539.6 263.5,537.4 271.5,535.4 279.5,533.4 287.5,531.6 295.5,529.2 303.5,528.3 311.5,528.7 319.5,528.9 327.5,528.3 335.5,527.5 343.5,526.9 351.5,526.4 359.5,525.9 367.5,525.8 375.5,525.9 383.5,526.2 391.5,526.6 399.5,527.1 407.5,527.9 415.5,528.9 423.5,529.9 431.5,532.2 439.5,536.1 447.5,540.6 455.5,545.2 463.5,549.8 471.5,554.3 479.5,558.0 487.5,562.0 495.5,565.7 503.5,569.0 511.5,571.5 519.5,573.9 527.5,575.1 535.5,575.1 543.5,574.4 551.5,573.2 559.5,571.1 567.5,567.6 575.5,563.0 583.5,557.5 591.5,552.1 599.5,546.7 607.5,540.6 615.5,535.0 623.5,529.3 631.5,523.7 639.5,518.5 647.5,513.8 655.5,509.3 663.5,505.9 671.5,503.5 679.5,502.3 687.5,502.1 695.5,502.9 703.5,504.7 711.5,506.7 719.5,508.5 727.5,509.9 735.5,511.6 743.5,513.5 751.5,515.8 759.5,518.7 767.5,522.3 775.5,525.6 783.5,528.6 791.5,531.4 799.5,533.4 807.5,535.0 815.5,535.9 823.5,536.1 831.5,536.5 839.5,537.0 847.5,538.7 855.5,540.6 863.5,542.5 871.5,544.5 879.5,546.1 887.5,547.3 895.5,549.2 903.5,551.9 911.5,554.8 919.5,556.4 927.5,557.0 935.5,556.8 943.5,554.7 951.5,550.4 959.5,545.3 967.5,540.0 975.5,535.2 983.5,532.1 991.5,530.0 999.5,528.6 1007.5,527.7 1015.5,527.9 1023.5,528.7 1031.5,529.5 1039.5,531.2 1047.5,533.2 1055.5,534.3 1063.5,534.9 1071.5,535.2" fill="none" stroke="#e6e628" stroke-width="1" shape-rendering="crispEdges"/>
<polyline points="95.5,544.5 103.5,549.4 111.5,555.7 119.5,557.5 127.5,563.6 135.5,569.4 143.5,571.3 151.5,573.5 159.5,574.4 167.5,570.0 175.5,565.1 183.5,559.2 191.5,551.9 199.5,547.7 207.5,544.6 215.5,541.1 223.5,538.1 231.5,538.1 239.5,536.3 247.5,530.7 255.5,528.8 263.5,528.9 271.5,527.2 279.5,525.2 287.5,524.4 295.5,519.6 303.5,524.6 311.5,530.3 319.5,530.1 327.5,525.7 335.5,524.6 343.5,524.1 351.5,524.5 359.5,523.8 367.5,525.7 375.5,526.3 383.5,527.3 391.5,528.2 399.5,529.0 407.5,531.3 415.5,532.8 423.5,533.7 431.5,541.5 439.5,551.6 447.5,558.8 455.5,563.6 463.5,568.0 471.5,572.2 479.5,573.2 487.5,577.6 495.5,580.7 503.5,582.0 511.5,581.8 519.5,583.3 527.5,579.8 535.5,575.0 543.5,571.6 551.5,568.5 559.5,562.7 567.5,553.7 575.5,544.4 583.5,535.6 591.5,530.3 599.5,525.2 607.5,516.5 615.5,512.4 623.5,506.7 631.5,501.3 639.5,497.4 647.5,495.0 655.5,491.4 663.5,492.3 671.5,493.8 679.5,497.6 687.5,501.3 695.5,506.2 703.5,511.9 711.5,514.4 719.5,515.7 727.5,515.4 735.5,518.4 743.5,521.0 751.5,525.0 759.5,530.3 767.5,536.6 775.5,538.7 783.5,540.5 791.5,542.7 799.5,541.3 807.5,541.4 815.5,539.8 823.5,536.8 831.5,537.9 839.5,539.2 847.5,545.4 855.5,548.3 863.5,549.9 871.5,552.4 879.5,552.5 887.5,552.4 895.5,556.6 903.5,563.0 911.5,566.3 919.5,562.9 927.5,559.4 935.5,555.9 943.5,546.1 951.5,533.5 959.5,524.9 967.5,518.5 975.5,516.4 983.5,519.3 991.5,521.9 999.5,522.6 1007.5,524.2 1015.5,529.0 1023.5,531.6 1031.5,533.0 1039.5,537.6 1047.5,541.2 1055.5,538.7 1063.5,537.6 1071.5,536.3" fill="none" stroke="#e8e8e8" stroke-width="1" shape-rendering="crispEdges"/>
<g shape-rendering="crispEdges" fill="#ff0000"><rect x="27" y="589" width="4" height="6" fill="#ffffff"/><rect x="26" y="590" width="6" height="4" fill="#ffffff"/><rect x="28" y="590" width="2" height="4"/><rect x="27" y="591" width="4" height="2"/><rect x="28" y="585" width="1" height="2"/><rect x="28" y="597" width="1" height="2"/><rect x="22" y="591" width="2" height="1"/><rect x="34" y="591" width="2" height="1"/><rect x="23" y="586" width="1" height="1"/><rect x="24" y="587" width="1" height="1"/><rect x="34" y="586" width="1" height="1"/><rect x="33" y="587" width="1" height="1"/><rect x="24" y="596" width="1" height="1"/><rect x="23" y="597" width="1" height="1"/><rect x="33" y="596" width="1" height="1"/><rect x="34" y="597" width="1" height="1"/></g>
<text x="92" y="599" font-size="12.3" fill="#dcdcdc">KDJ(9,3,3)</text>
<text x="154" y="599" font-size="12.3" fill="#dcdcdc">K:39.54</text>
<text x="204" y="599" font-size="12.3" fill="#d4d428">D:30.72</text>
<text x="253" y="599" font-size="12.3" fill="#c83ce0">J:57.18</text>
<polyline points="95.5,679.5 103.5,679.8 111.5,681.6 119.5,682.4 127.5,684.2 135.5,685.5 143.5,685.3 151.5,684.1 159.5,682.6 167.5,678.8 175.5,672.8 183.5,665.6 191.5,657.8 199.5,651.7 207.5,647.5 215.5,644.8 223.5,643.1 231.5,644.5 239.5,647.3 247.5,646.0 255.5,646.7 263.5,650.2 271.5,652.8 279.5,654.3 287.5,656.2 295.5,653.9 303.5,657.4 311.5,663.0 319.5,665.9 327.5,664.7 335.5,663.5 343.5,662.8 351.5,663.0 359.5,663.2 367.5,664.9 375.5,665.8 383.5,667.0 391.5,670.0 399.5,673.2 407.5,676.5 415.5,677.1 423.5,676.6 431.5,678.4 439.5,680.8 447.5,682.9 455.5,684.6 463.5,686.4 471.5,688.1 479.5,687.5 487.5,687.4 495.5,687.6 503.5,687.4 511.5,686.3 519.5,686.4 527.5,682.6 535.5,676.5 543.5,670.9 551.5,666.1 559.5,659.8 567.5,652.9 575.5,646.4 583.5,640.9 591.5,638.3 599.5,637.8 607.5,636.0 615.5,635.6 623.5,634.3 631.5,633.0 639.5,633.4 647.5,635.1 655.5,635.4 663.5,638.5 671.5,643.9 679.5,651.8 687.5,659.8 695.5,667.3 703.5,672.9 711.5,675.6 719.5,676.5 727.5,675.5 735.5,675.8 743.5,675.8 751.5,677.6 759.5,680.3 767.5,682.5 775.5,682.6 783.5,682.0 791.5,681.9 799.5,680.1 807.5,678.2 815.5,675.0 823.5,669.7 831.5,667.9 839.5,669.3 847.5,672.3 855.5,674.2 863.5,675.3 871.5,677.0 879.5,677.8 887.5,678.5 895.5,680.4 903.5,682.9 911.5,684.8 919.5,681.7 927.5,676.8 935.5,671.3 943.5,663.4 951.5,655.3 959.5,648.7 967.5,643.8 975.5,641.4 983.5,642.5 991.5,646.5 999.5,652.3 1007.5,657.4 1015.5,663.6 1023.5,669.1 1031.5,673.5 1039.5,677.8 1047.5,681.2 1055.5,679.4 1063.5,676.3 1071.5,672.9" fill="none" stroke="#e6e628" stroke-width="1" shape-rendering="crispEdges"/>
<polyline points="95.5,673.9 103.5,680.4 111.5,685.1 119.5,683.9 127.5,687.8 135.5,688.2 143.5,684.7 151.5,681.7 159.5,679.6 167.5,671.2 175.5,660.8 183.5,651.3 191.5,642.0 199.5,639.6 207.5,639.0 215.5,639.4 223.5,639.7 231.5,647.2 239.5,653.0 247.5,643.5 255.5,648.1 263.5,657.1 271.5,658.0 279.5,657.4 287.5,659.8 295.5,649.3 303.5,664.4 311.5,674.1 319.5,671.7 327.5,662.4 335.5,661.1 343.5,661.4 351.5,663.5 359.5,663.4 367.5,668.4 375.5,667.6 383.5,669.5 391.5,675.8 399.5,679.7 407.5,683.1 415.5,678.4 423.5,675.4 431.5,682.2 439.5,685.4 447.5,687.3 455.5,687.9 463.5,690.1 471.5,691.5 479.5,686.4 487.5,687.0 495.5,688.0 503.5,687.1 511.5,684.1 519.5,686.5 527.5,675.0 535.5,664.4 543.5,659.8 551.5,656.3 559.5,647.4 567.5,638.9 575.5,633.4 583.5,629.9 591.5,633.2 599.5,636.7 607.5,632.5 615.5,634.7 623.5,631.9 631.5,630.3 639.5,634.3 647.5,638.4 655.5,636.1 663.5,644.6 671.5,654.7 679.5,667.6 687.5,675.8 695.5,682.1 703.5,684.0 711.5,681.1 719.5,678.2 727.5,673.7 735.5,676.2 743.5,676.0 751.5,681.0 759.5,685.9 767.5,686.8 775.5,682.7 783.5,680.9 791.5,681.8 799.5,676.4 807.5,674.5 815.5,668.6 823.5,658.9 831.5,664.4 839.5,671.9 847.5,678.5 855.5,678.1 863.5,677.5 871.5,680.3 879.5,679.5 887.5,679.8 895.5,684.2 903.5,688.0 911.5,688.4 919.5,675.7 927.5,666.8 935.5,660.4 943.5,647.5 951.5,639.2 959.5,635.5 967.5,633.9 975.5,636.7 983.5,644.6 991.5,654.7 999.5,663.7 1007.5,667.5 1015.5,676.1 1023.5,680.1 1031.5,682.3 1039.5,686.5 1047.5,687.9 1055.5,675.8 1063.5,670.2 1071.5,666.2" fill="none" stroke="#e8e8e8" stroke-width="1" shape-rendering="crispEdges"/>
<polyline points="95.5,662.7 103.5,681.6 111.5,692.1 119.5,687.0 127.5,695.1 135.5,693.6 143.5,683.7 151.5,676.9 159.5,673.7 167.5,655.9 175.5,636.9 183.5,622.6 191.5,610.6 199.5,615.5 207.5,622.1 215.5,628.7 223.5,632.9 231.5,652.6 239.5,664.3 247.5,638.5 255.5,650.8 263.5,671.1 271.5,668.5 279.5,663.6 287.5,667.1 295.5,640.1 303.5,678.5 311.5,696.3 319.5,683.5 327.5,657.6 335.5,656.2 343.5,658.7 351.5,664.4 359.5,663.9 367.5,675.3 375.5,671.3 383.5,674.5 391.5,687.5 399.5,692.7 407.5,696.2 415.5,680.9 423.5,673.2 431.5,689.6 439.5,694.8 447.5,696.0 455.5,694.5 463.5,697.3 471.5,698.3 479.5,684.1 487.5,686.3 495.5,688.9 503.5,686.5 511.5,679.7 519.5,686.7 527.5,659.8 535.5,640.1 543.5,637.6 551.5,636.7 559.5,622.4 567.5,611.0 575.5,607.5 583.5,607.9 591.5,623.0 599.5,634.5 607.5,625.4 615.5,633.0 623.5,626.9 631.5,625.0 639.5,635.9 647.5,645.0 655.5,637.4 663.5,656.9 671.5,676.3 679.5,699.3 687.5,707.9 695.5,711.9 703.5,706.4 711.5,692.2 719.5,681.6 727.5,669.9 735.5,677.1 743.5,676.4 751.5,687.9 759.5,696.9 767.5,695.3 775.5,683.0 783.5,678.8 791.5,681.5 799.5,668.9 807.5,667.1 815.5,655.8 823.5,637.4 831.5,657.5 839.5,677.2 847.5,690.8 855.5,685.7 863.5,681.9 871.5,687.0 879.5,682.9 887.5,682.5 895.5,691.8 903.5,698.1 911.5,695.7 919.5,663.6 927.5,646.9 935.5,638.7 943.5,615.8 951.5,606.9 959.5,609.1 967.5,614.1 975.5,627.2 983.5,648.9 991.5,671.0 999.5,686.5 1007.5,687.9 1015.5,701.2 1023.5,702.2 1031.5,699.8 1039.5,703.7 1047.5,701.2 1055.5,668.7 1063.5,657.9 1071.5,652.7" fill="none" stroke="#d23ce6" stroke-width="1" shape-rendering="crispEdges"/>
<text x="34" y="727" font-size="13" font-weight="bold" fill="#f2c14e">日线</text>
<path d="M64.5 726.5 L69 718 L73.5 726.5 Z" fill="#f2b84e"/>
<rect x="239" y="712" width="1" height="5" fill="#3a3a3a" shape-rendering="crispEdges"/>
<text x="241" y="723.7" font-size="12.4" font-weight="bold" fill="#bcbcbc">2022/06</text>
<rect x="415" y="712" width="1" height="5" fill="#3a3a3a" shape-rendering="crispEdges"/>
<text x="417" y="723.7" font-size="12.4" font-weight="bold" fill="#bcbcbc">2022/07</text>
<rect x="583" y="712" width="1" height="5" fill="#3a3a3a" shape-rendering="crispEdges"/>
<text x="585" y="723.7" font-size="12.4" font-weight="bold" fill="#bcbcbc">2022/08</text>
<rect x="767" y="712" width="1" height="5" fill="#3a3a3a" shape-rendering="crispEdges"/>
<text x="769" y="723.7" font-size="12.4" font-weight="bold" fill="#bcbcbc">2022/09</text>
<rect x="943" y="712" width="1" height="5" fill="#3a3a3a" shape-rendering="crispEdges"/>
<text x="945" y="723.7" font-size="12.4" font-weight="bold" fill="#bcbcbc">2022/10</text>
<rect x="21" y="732" width="1150" height="15" fill="#0c0c0c"/>
<rect x="60" y="732" width="1" height="15" fill="#2a2a2a" shape-rendering="crispEdges"/>
<text x="40.5" y="743.5" font-size="13" fill="#c8c8c8" text-anchor="middle">指标</text>
<rect x="61" y="732" width="38" height="15" fill="#3d404c"/>
<rect x="99" y="732" width="1" height="15" fill="#2a2a2a" shape-rendering="crispEdges"/>
<text x="80.0" y="743.5" font-size="13" fill="#ffffff" text-anchor="middle">模板</text>
<rect x="157" y="732" width="1" height="15" fill="#2a2a2a" shape-rendering="crispEdges"/>
<text x="128.5" y="743.5" font-size="12" fill="#f2c14e" text-anchor="middle"><tspan style="font-family:'Liberation Mono',monospace" font-size="11">VIP</tspan><tspan font-size="13">指标</tspan></text>
<rect x="197" y="732" width="1" height="15" fill="#2a2a2a" shape-rendering="crispEdges"/>
<text x="177.5" y="743.5" font-size="13" fill="#c8c8c8" text-anchor="middle">标准</text>
<rect x="198" y="732" width="39" height="15" fill="#3d404c"/>
<rect x="237" y="732" width="1" height="15" fill="#2a2a2a" shape-rendering="crispEdges"/>
<text x="217.5" y="743.5" font-size="11" fill="#ffffff" text-anchor="middle" style="font-family:'Liberation Mono',monospace">MACD</text>
<rect x="278" y="732" width="1" height="15" fill="#2a2a2a" shape-rendering="crispEdges"/>
<text x="258.0" y="743.5" font-size="11" fill="#c8c8c8" text-anchor="middle" style="font-family:'Liberation Mono',monospace">BOLL</text>
<rect x="341" y="732" width="1" height="15" fill="#2a2a2a" shape-rendering="crispEdges"/>
<text x="310.0" y="743.5" font-size="13" fill="#c8c8c8" text-anchor="middle">另存模板</text>
<rect x="405" y="732" width="1" height="15" fill="#2a2a2a" shape-rendering="crispEdges"/>
<text x="373.5" y="743.5" font-size="13" fill="#c8c8c8" text-anchor="middle">管理模板</text>
</svg></body></html>
